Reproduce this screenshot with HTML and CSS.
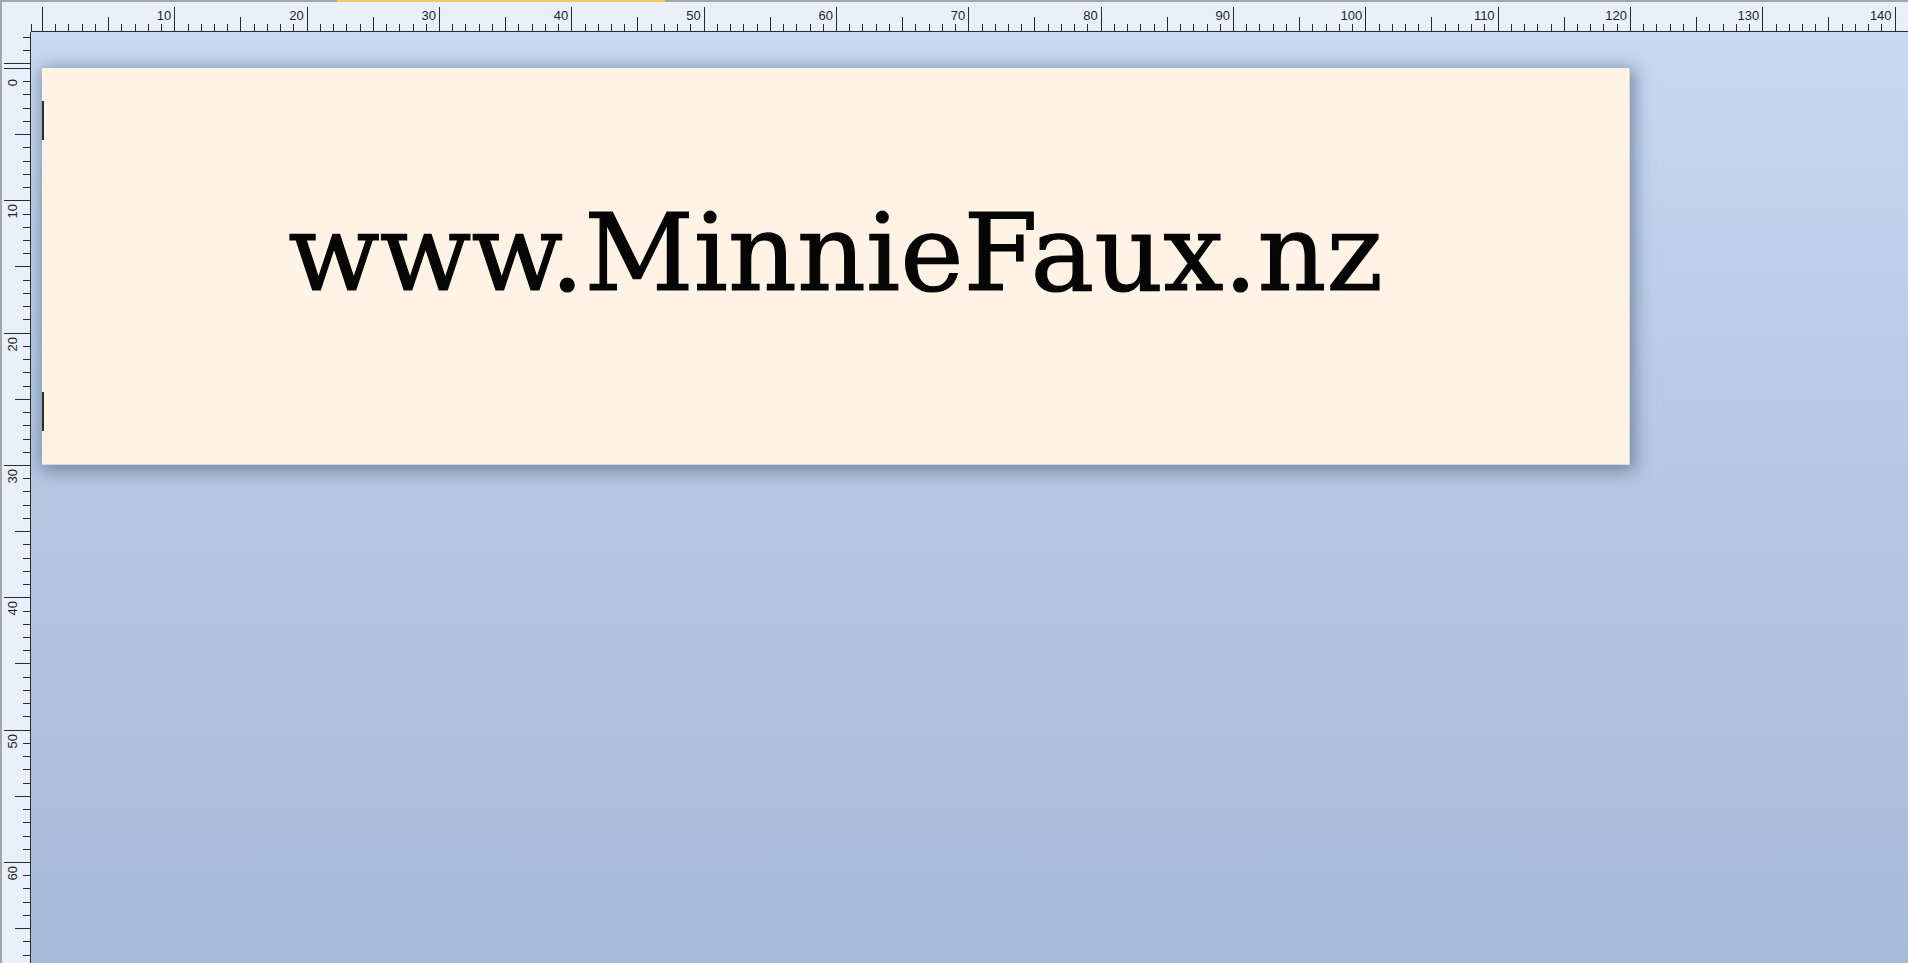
FILE: index.html
```html
<!DOCTYPE html>
<html lang="en">
<head>
<meta charset="utf-8">
<title>MinnieFaux</title>
<link rel="stylesheet" href="styles.css">
</head>
<body>
<div class="app">
  <div class="tab-mark"></div>
  <div class="corner"></div>
  <div class="hruler">
    <div class="hlabels">
      <span class="hcell">10</span><span class="hcell">20</span><span class="hcell">30</span><span class="hcell">40</span><span class="hcell">50</span><span class="hcell">60</span><span class="hcell">70</span><span class="hcell">80</span><span class="hcell">90</span><span class="hcell">100</span><span class="hcell">110</span><span class="hcell">120</span><span class="hcell">130</span><span class="hcell">140</span>
    </div>
  </div>
  <div class="vruler">
    <div class="vlabels">
      <div class="vcell"><span class="vtext">0</span></div>
      <div class="vcell"><span class="vtext">10</span></div>
      <div class="vcell"><span class="vtext">20</span></div>
      <div class="vcell"><span class="vtext">30</span></div>
      <div class="vcell"><span class="vtext">40</span></div>
      <div class="vcell"><span class="vtext">50</span></div>
      <div class="vcell"><span class="vtext">60</span></div>
    </div>
  </div>
  <div class="canvas">
    <div class="page">
      <span class="marker marker-top"></span>
      <span class="marker marker-bottom"></span>
      <div class="headline">www.MinnieFaux.nz</div>
    </div>
  </div>
</div>
</body>
</html>
```

FILE: styles.css
```css
html, body {
  margin: 0;
  padding: 0;
  width: 100%;
  height: 100%;
  overflow: hidden;
}

body {
  font-family: "Liberation Sans", Arial, sans-serif;
}

.app {
  position: relative;
  display: grid;
  grid-template-columns: 31px 1fr;
  grid-template-rows: 32px 1fr;
  width: 1908px;
  height: 963px;
  background: #e9f0fa;
}

.tab-mark {
  position: absolute;
  left: 337px;
  top: 0;
  width: 328px;
  height: 2px;
  background: #f4c862;
}

.corner {
  border-top: 2px solid #a3a6ab;
  border-left: 2px solid #a3a6ab;
  background: #e9f0fa;
}

.hruler {
  border-top: 2px solid #a3a6ab;
  border-bottom: 1px solid #2a2a2a;
  background-color: #e9f0fa;
  background-image:
    repeating-linear-gradient(to right, #2a2a2a 0 1px, transparent 1px 132.33px),
    repeating-linear-gradient(to right, #2a2a2a 0 1px, transparent 1px 66.166px),
    repeating-linear-gradient(to right, #2a2a2a 0 1px, transparent 1px 13.233px);
  background-repeat: repeat-x;
  background-size: 100% 24px, 100% 14px, 100% 7px;
  background-position: 11px bottom, 11px bottom, 11px bottom;
  overflow: hidden;
}

.hlabels {
  display: flex;
  margin-left: 11px;
  padding-top: 7px;
}

.hcell {
  flex: 0 0 132.33px;
  box-sizing: border-box;
  text-align: right;
  padding-right: 3px;
  font-size: 13px;
  line-height: 13px;
  color: #1e1e2e;
}

.vruler {
  border-left: 2px solid #a3a6ab;
  border-right: 1px solid #2a2a2a;
  background-color: #e9f0fa;
  background-image:
    repeating-linear-gradient(to bottom, #2a2a2a 0 1px, transparent 1px 132.33px),
    repeating-linear-gradient(to bottom, #2a2a2a 0 1px, transparent 1px 66.166px),
    repeating-linear-gradient(to bottom, #2a2a2a 0 1px, transparent 1px 13.233px);
  background-repeat: repeat-y;
  background-size: 26px 100%, 15px 100%, 7px 100%;
  background-position: right 36px, right 36px, right 36px;
  overflow: hidden;
}

.vlabels {
  display: flex;
  flex-direction: column;
  margin-top: 36px;
}

.vcell {
  flex: 0 0 132.33px;
  box-sizing: border-box;
  padding-top: 4px;
  padding-left: 4px;
}

.vtext {
  display: inline-block;
  writing-mode: vertical-rl;
  transform: rotate(180deg);
  font-size: 13px;
  line-height: 13px;
  color: #1e1e2e;
}

.canvas {
  background: linear-gradient(to bottom, #c8daf1 0%, #b5c9e3 45%, #a6bbd7 100%);
  padding: 36px 0 0 11px;
  overflow: hidden;
}

.page {
  position: relative;
  box-sizing: border-box;
  width: 1588px;
  height: 397px;
  background: #fef3e4;
  border-right: 1px solid #d4d8df;
  border-bottom: 1px solid #d4d8df;
  box-shadow: 2px 3px 16px 3px rgba(60, 80, 112, 0.55);
  display: flex;
  align-items: center;
  justify-content: center;
  padding-bottom: 26px;
}

.marker {
  position: absolute;
  left: 0;
  width: 2px;
  height: 39px;
  background: #2b2b2b;
}

.marker-top {
  top: 33px;
}

.marker-bottom {
  top: 324px;
}

.headline {
  font-family: "DejaVu Serif", "Liberation Serif", serif;
  font-size: 107px;
  line-height: 1;
  color: #050505;
  -webkit-text-stroke: 1.2px #050505;
  white-space: nowrap;
}
```
